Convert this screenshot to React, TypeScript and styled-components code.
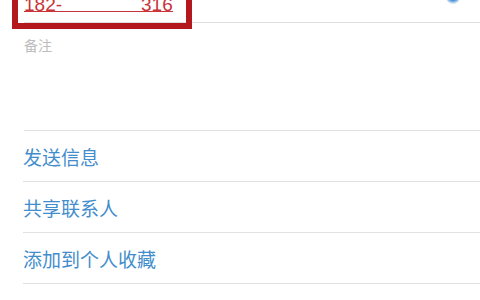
import React from "react";
import styled, { createGlobalStyle } from "styled-components";

const GlobalStyle = createGlobalStyle`
  html, body {
    margin: 0;
    padding: 0;
    background: #ffffff;
    overflow: hidden;
  }
  body {
    font-family: "Noto Sans", "Noto Sans CJK SC", sans-serif;
  }
`;

const Page = styled.div`
  width: 480px;
  height: 300px;
  overflow: hidden;
  background: #fff;
`;

const PhoneRow = styled.div`
  position: relative;
  height: 22px;
  margin-left: 24px;
  border-bottom: 1px solid #dedede;
  display: flex;
  align-items: flex-end;
  padding-bottom: 10px;
  box-sizing: content-box;
`;

const PhoneNumber = styled.div`
  display: flex;
  align-items: flex-end;
  font-family: "Liberation Sans", "Noto Sans", sans-serif;
  font-size: 19px;
  line-height: 13px;
  height: 14px;
  color: #c8343a;
  border-bottom: 1px solid #c8343a;
`;

const Hidden = styled.span`
  display: block;
  width: 79px;
`;

const Highlight = styled.div`
  position: absolute;
  left: -12px;
  top: -14px;
  width: 168px;
  height: 41px;
  border: 6px solid #b3181d;
  pointer-events: none;
`;

const CallIcon = styled.div`
  position: absolute;
  right: 20px;
  top: 0;
  width: 14px;
  height: 14px;
  border-radius: 50%;
  background: radial-gradient(circle at 50% 40%, #4f93d8 0 45%, #cfe3f4 70%, #fbf4dc 100%);
  filter: blur(0.6px);
`;

const Content = styled.div`
  margin-top: -10px;
`;

const NoteRow = styled.div`
  height: 108px;
  box-sizing: border-box;
  margin-left: 24px;
  padding-top: 14px;
  border-bottom: 1px solid #e1e1e1;
  font-family: "Noto Sans CJK SC", sans-serif;
  font-size: 14px;
  line-height: 16px;
  color: #bdbdbd;
`;

const ActionList = styled.div`
  margin-left: 24px;
`;

const ActionRow = styled.div`
  height: 51px;
  box-sizing: border-box;
  border-bottom: 1px solid #e1e1e1;
  display: flex;
  align-items: center;
  font-family: "Noto Sans CJK SC", sans-serif;
  font-size: 19px;
  color: #438dcc;
  margin-left: -1px;
`;

const actions = ["发送信息", "共享联系人", "添加到个人收藏"];

export default function App() {
  return (
    <Page>
      <GlobalStyle />
      <Content>
        <PhoneRow>
          <PhoneNumber>
            <span>182-</span>
            <Hidden />
            <span>316</span>
          </PhoneNumber>
          <Highlight />
          <CallIcon />
        </PhoneRow>
        <NoteRow>备注</NoteRow>
        <ActionList>
          {actions.map((label) => (
            <ActionRow key={label}>{label}</ActionRow>
          ))}
        </ActionList>
      </Content>
    </Page>
  );
}
